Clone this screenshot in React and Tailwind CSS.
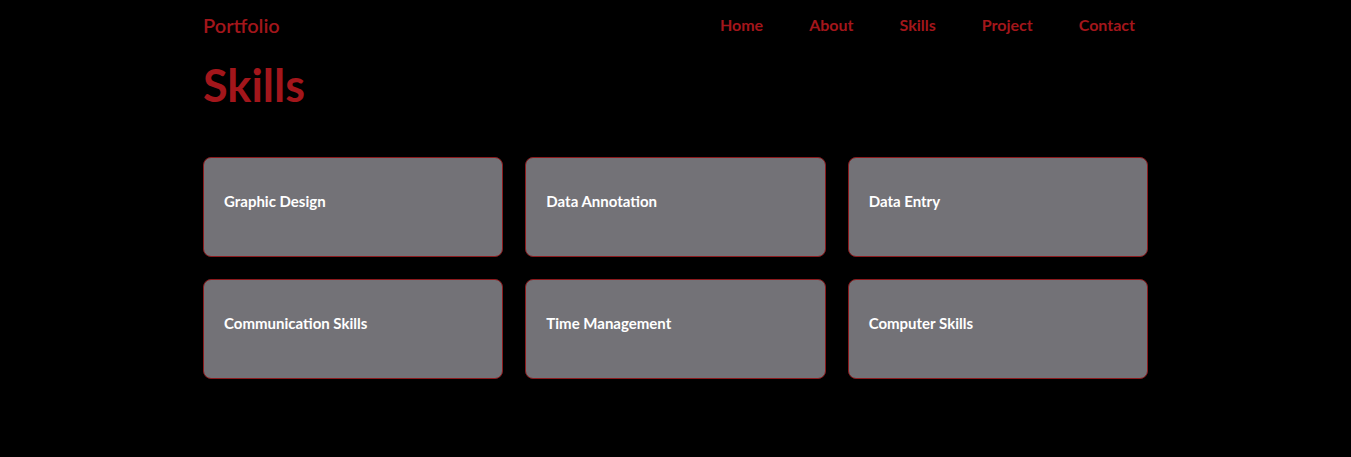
import React from 'react';

const skills = [
    'Graphic Design',
    'Data Annotation',
    'Data Entry',
    'Communication Skills',
    'Time Management',
    'Computer Skills',
];

const links = ['Home', 'About', 'Skills', 'Project', 'Contact'];

const App = () => {
    return (
        <div className="min-h-[457px] w-full bg-black font-['Lato','Liberation_Sans',sans-serif]">
            <div className="w-[945px] mx-auto">
                <nav className="flex items-center justify-between h-[50px]">
                    <div className="text-[20px] font-semibold text-[#a3161b]">Portfolio</div>
                    <ul className="flex gap-[46px] pr-[13px] text-[16px] font-bold text-[#a3161b]">
                        {links.map((link) => (
                            <li key={link} className="cursor-pointer">{link}</li>
                        ))}
                    </ul>
                </nav>

                <h1 className="text-[45px] leading-[60px] font-bold text-[#a3161b] mt-[5px]">Skills</h1>

                <div className="grid grid-cols-3 gap-[22px] mt-[42px]">
                    {skills.map((skill) => (
                        <div
                            key={skill}
                            className="h-[100px] bg-[#737277] border border-[#8b1a1d] rounded-lg px-5 pt-[32px]"
                        >
                            <div className="text-[15px] font-bold text-white">{skill}</div>
                        </div>
                    ))}
                </div>
            </div>
        </div>
    );
};

export default App;
